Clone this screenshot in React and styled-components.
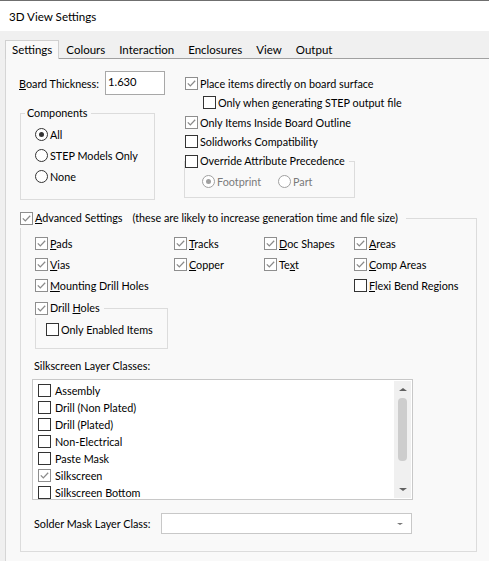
import React from 'react'
import styled, { createGlobalStyle } from 'styled-components'

const FONT = `Lato, "Liberation Sans", Arial, sans-serif`

const GlobalStyle = createGlobalStyle`
  html, body { margin: 0; padding: 0; background: #f0f0f0; }
  body { font-family: ${FONT}; font-size: 10.8px; color: #000; }
  * { box-sizing: border-box; }
`

const Window = styled.div`
  width: 489px;
  height: 561px;
  overflow: hidden;
  background: #f0f0f0;
  border-top: 1px solid #6f6f6f;
  display: flex;
  flex-direction: column;
`

const TitleBar = styled.div`
  height: 30px;
  flex: none;
  background: #fff;
  display: flex;
  align-items: center;
  padding-left: 9px;
  font-size: 11.6px;
`

const TabStrip = styled.div`
  height: 27px;
  flex: none;
  display: flex;
  align-items: flex-end;
  padding-left: 5px;
  position: relative;
  z-index: 1;
`

const Tab = styled.div`
  height: ${p => (p.$active ? 19 : 18)}px;
  padding: ${p => (p.$active ? '0 6px' : '0 7px')};
  display: flex;
  align-items: center;
  font-size: 11.5px;
  background: ${p => (p.$active ? '#f9f9f9' : 'transparent')};
  border: ${p => (p.$active ? '1px solid #d0d0d0' : 'none')};
  border-bottom: none;
  margin-bottom: ${p => (p.$active ? '-1px' : '0')};
  padding-bottom: ${p => (p.$active ? '1px' : '0')};
`

const Panel = styled.div`
  flex: 1;
  margin-left: 5px;
  width: 600px;
  background: #f9f9f9;
  border-top: 1px solid #a0a0a0;
  border-left: 1px solid #d6d6d6;
  padding: 12px 0 0 13px;
`

const TopSection = styled.div`
  display: flex;
  align-items: flex-start;
`

const LeftCol = styled.div`
  width: 166px;
  flex: none;
`

const RightCol = styled.div`
  padding-top: 2px;
  display: flex;
  flex-direction: column;
`

const FieldRow = styled.div`
  display: flex;
  align-items: center;
  height: ${p => p.$h || 24}px;
`

const FieldLabel = styled.span`
  width: ${p => p.$w}px;
  flex: none;
  white-space: nowrap;
`

const TextInput = styled.div`
  width: 60px;
  height: 24px;
  border: 1px solid #a8a8a8;
  background: #fff;
  padding: 3px 0 0 2px;
  font-size: 11.2px;
`

const Group = styled.fieldset`
  margin: ${p => p.$margin || 0};
  padding: ${p => p.$pad || 0};
  border: 1px solid #dcdcdc;
  width: ${p => p.$w}px;
  min-inline-size: 0;
`

const Legend = styled.legend`
  margin-left: ${p => p.$ml || 0}px;
  padding: 0 ${p => p.$pr || 0}px 0 ${p => p.$pl || 0}px;
  line-height: 14px;
  white-space: nowrap;
`

const Row = styled.div`
  display: flex;
  align-items: center;
  gap: ${p => (p.$gap != null ? p.$gap : 2)}px;
  height: ${p => p.$h || 21}px;
  padding-left: ${p => p.$indent || 0}px;
  white-space: nowrap;
  color: ${p => (p.$disabled ? '#7a7a7a' : '#000')};
`

const Box = styled.span`
  width: 13px;
  height: 13px;
  flex: none;
  background: #fff;
  border: 1px solid ${p => (p.$checked ? '#8e8e8e' : '#333')};
  display: flex;
  align-items: center;
  justify-content: center;
`

const Circle = styled.span`
  width: 13px;
  height: 13px;
  flex: none;
  border-radius: 50%;
  background: #fff;
  border: 1px solid ${p => (p.$disabled ? '#a0a0a0' : '#333')};
  display: flex;
  align-items: center;
  justify-content: center;
  &::after {
    content: '';
    display: ${p => (p.$on ? 'block' : 'none')};
    width: 5px;
    height: 5px;
    border-radius: 50%;
    background: ${p => (p.$disabled ? '#a0a0a0' : '#333')};
  }
`

const RadioPair = styled.div`
  display: flex;
  align-items: center;
  gap: 2px;
  width: ${p => (p.$w ? `${p.$w}px` : 'auto')};
`

const Check = ({ checked }) => (
  <Box $checked={checked}>
    {checked && (
      <svg width="11" height="11" viewBox="0 0 11 11">
        <path d="M1.8 5.4 L4.3 7.9 L9.2 2.8" fill="none" stroke="#8a8a8a" strokeWidth="1.3" />
      </svg>
    )}
  </Box>
)

const Mn = styled.u`
  text-underline-offset: 1px;
`

const Advanced = styled(Group)`
  margin: 8px 0 0 1px;
  padding: 5px 0 17px 11px;
`

const Note = styled.span`
  margin-left: 8px;
`

const Columns = styled.div`
  display: grid;
  grid-template-columns: 139px 90px 90px 1fr;
  margin-left: 3px;
`

const SectionLabel = styled.div`
  height: 16px;
  line-height: 16px;
  margin: 9px 0 0 2px;
`

const ListBox = styled.div`
  width: 381px;
  height: 121px;
  margin-top: 5px;
  background: #fff;
  border: 1px solid #c8c8c8;
  display: flex;
`

const ListItems = styled.div`
  flex: 1;
  padding: 2px 0 0 5px;
`

const ScrollBar = styled.div`
  width: 17px;
  margin: 1px 1px 1px 0;
  background: #f0f0f0;
  display: flex;
  flex-direction: column;
  align-items: center;
`

const ArrowZone = styled.div`
  height: 17px;
  flex: none;
  display: flex;
  align-items: center;
  justify-content: center;
`

const Spacer = styled.div`
  flex: 1;
`

const Arrow = styled.span`
  width: 0;
  height: 0;
  border-left: ${p => p.$size}px solid transparent;
  border-right: ${p => p.$size}px solid transparent;
  ${p => (p.$up ? 'border-bottom' : 'border-top')}: ${p => p.$size - 0.5}px solid ${p => p.$color || '#606060'};
`

const Thumb = styled.div`
  width: 9px;
  height: 63px;
  border-radius: 4px;
  background: #cdcdcd;
`

const SolderRow = styled.div`
  display: flex;
  align-items: center;
  margin: 13px 0 0 2px;
  height: 21px;
`

const Combo = styled.div`
  width: 251px;
  height: 21px;
  background: #fff;
  border: 1px solid #c8c8c8;
  display: flex;
  align-items: center;
  justify-content: flex-end;
  padding-right: 8px;
`

const layers = [
  ['Assembly', false],
  ['Drill (Non Plated)', false],
  ['Drill (Plated)', false],
  ['Non-Electrical', false],
  ['Paste Mask', false],
  ['Silkscreen', true],
  ['Silkscreen Bottom', false],
]

const Item = ({ checked, children, h, indent, gap }) => (
  <Row $h={h} $indent={indent} $gap={gap}>
    <Check checked={checked} />
    <span>{children}</span>
  </Row>
)

export default function App() {
  return (
    <>
      <GlobalStyle />
      <Window>
        <TitleBar>3D View Settings</TitleBar>
        <TabStrip>
          <Tab $active>Settings</Tab>
          <Tab>Colours</Tab>
          <Tab>Interaction</Tab>
          <Tab>Enclosures</Tab>
          <Tab>View</Tab>
          <Tab>Output</Tab>
        </TabStrip>
        <Panel>
          <TopSection>
            <LeftCol>
              <FieldRow>
                <FieldLabel $w={86}><Mn>B</Mn>oard Thickness:</FieldLabel>
                <TextInput>1.630</TextInput>
              </FieldRow>
              <Group $margin="11px 0 0 1px" $pad="4px 0 12px 14px" $w={135}>
                <Legend $ml={-10} $pl={2} $pr={3}>Components</Legend>
                <Row><Circle $on /><span>All</span></Row>
                <Row><Circle /><span>STEP Models Only</span></Row>
                <Row><Circle /><span>None</span></Row>
              </Group>
            </LeftCol>
            <RightCol>
              <Item checked h={20}>Place items directly on board surface</Item>
              <Item h={19} indent={18}>Only when generating STEP output file</Item>
              <Item checked h={20}>Only Items Inside Board Outline</Item>
              <Item h={19}>Solidworks Compatibility</Item>
              <Group $margin="0 0 0 -1px" $pad="0 0 6px 17px" $w={171}>
                <Legend $ml={-17} $pr={4}>
                  <Item h={20}>Override Attribute Precedence</Item>
                </Legend>
                <Row $h={20} $disabled>
                  <RadioPair $w={74}><Circle $on $disabled /><span>Footprint</span></RadioPair>
                  <RadioPair><Circle $disabled /><span>Part</span></RadioPair>
                </Row>
              </Group>
            </RightCol>
          </TopSection>

          <Advanced $w={457}>
            <Legend $ml={-12} $pr={8}>
              <Row $h={20}>
                <Check checked />
                <span><Mn>A</Mn>dvanced Settings</span>
                <Note>(these are likely to increase generation time and file size)</Note>
              </Row>
            </Legend>
            <Columns>
              <div>
                <Item checked><Mn>P</Mn>ads</Item>
                <Item checked><Mn>V</Mn>ias</Item>
                <Item checked><Mn>M</Mn>ounting Drill Holes</Item>
              </div>
              <div>
                <Item checked><Mn>T</Mn>racks</Item>
                <Item checked><Mn>C</Mn>opper</Item>
              </div>
              <div>
                <Item checked><Mn>D</Mn>oc Shapes</Item>
                <Item checked>Te<Mn>x</Mn>t</Item>
              </div>
              <div>
                <Item checked><Mn>A</Mn>reas</Item>
                <Item checked><Mn>C</Mn>omp Areas</Item>
                <Item><Mn>F</Mn>lexi Bend Regions</Item>
              </div>
            </Columns>
            <Group $margin="2px 0 0 3px" $pad="1px 0 9px 10px" $w={133}>
              <Legend $ml={-11} $pr={4}>
                <Item checked h={20}>Drill <Mn>H</Mn>oles</Item>
              </Legend>
              <Item h={20}>Only Enabled Items</Item>
            </Group>

            <SectionLabel>Silkscreen Layer Classes:</SectionLabel>
            <ListBox>
              <ListItems>
                {layers.map(([name, on]) => (
                  <Item key={name} checked={on} h={17} gap={4}>{name}</Item>
                ))}
              </ListItems>
              <ScrollBar>
                <ArrowZone><Arrow $up $size={4} /></ArrowZone>
                <Thumb />
                <Spacer />
                <ArrowZone><Arrow $size={4} /></ArrowZone>
              </ScrollBar>
            </ListBox>

            <SolderRow>
              <FieldLabel $w={127}>Solder Mask Layer Class:</FieldLabel>
              <Combo><Arrow $size={3} $color="#777" /></Combo>
            </SolderRow>
          </Advanced>
        </Panel>
      </Window>
    </>
  )
}
